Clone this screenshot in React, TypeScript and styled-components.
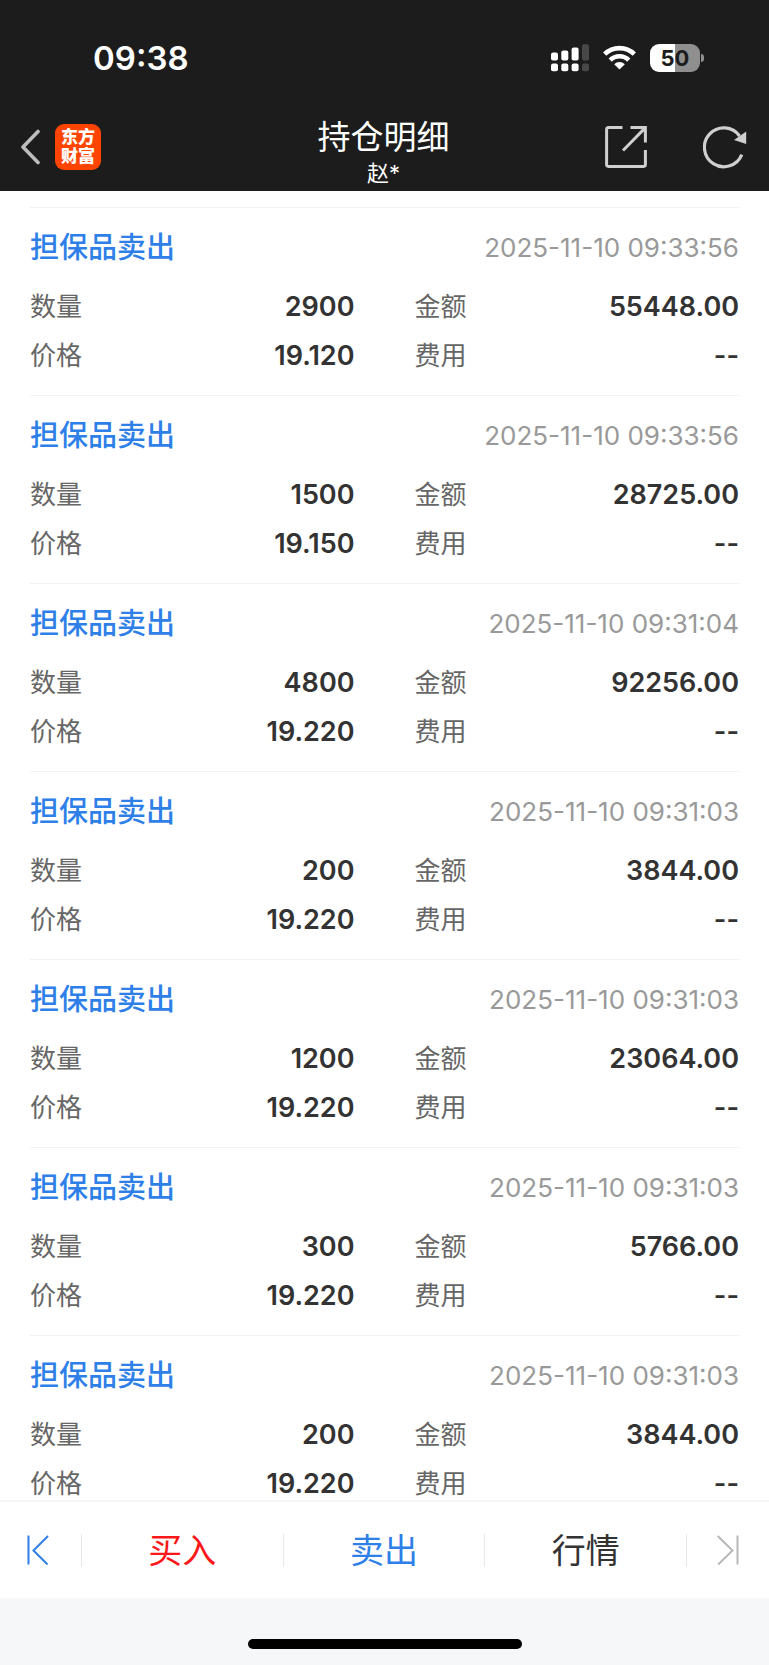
import React from "react";
import styled, { createGlobalStyle } from "styled-components";

const GlobalStyle = createGlobalStyle`
  *, *::before, *::after { box-sizing: border-box; }
  body {
    margin: 0;
    background: #ffffff;
    color: #333333;
    font-family: Inter, "Noto Sans CJK SC", sans-serif;
  }
  button {
    margin: 0;
    padding: 0;
    border: 0;
    background: none;
    color: inherit;
    font: inherit;
    cursor: pointer;
  }
  svg { display: block; }
`;

const Screen = styled.div`
  display: flex;
  flex-direction: column;
  height: 100vh;
`;

const Header = styled.header`
  flex: none;
  background: #1c1c1c;
  color: #ffffff;
`;

const StatusBar = styled.div`
  display: flex;
  align-items: center;
  justify-content: space-between;
  height: 115px;
  padding: 0 65px 0 93px;
`;

const Clock = styled.time`
  font-size: 33px;
  font-weight: 600;
  line-height: 40px;
`;

const StatusIcons = styled.div`
  display: flex;
  align-items: center;
  gap: 14px;
`;

const Battery = styled.div`
  display: flex;
  align-items: center;
  gap: 1px;
`;

const BatteryBody = styled.span`
  width: 50px;
  height: 28px;
  border-radius: 9px;
  background: linear-gradient(90deg, #ffffff 50%, #8f8f8f 50%);
  color: #1c1c1c;
  font-size: 22px;
  font-weight: 700;
  line-height: 28px;
  text-align: center;
`;

const BatteryTip = styled.span`
  width: 3px;
  height: 8px;
  border-radius: 0 3px 3px 0;
  background: #8f8f8f;
`;

const NavBar = styled.div`
  display: grid;
  grid-template-columns: 1fr auto 1fr;
  align-items: center;
  height: 76px;
  padding: 0 22px 0 20px;
`;

const NavLeft = styled.div`
  display: flex;
  align-items: center;
  gap: 14px;
  padding-bottom: 12px;
`;

const NavRight = styled.div`
  display: flex;
  align-items: center;
  justify-content: flex-end;
  gap: 56px;
  padding-bottom: 12px;
`;

const Logo = styled.span`
  display: flex;
  flex-direction: column;
  align-items: center;
  justify-content: center;
  width: 46px;
  height: 46px;
  border-radius: 9px;
  background: #ff4400;
  font-size: 17px;
  font-weight: 900;
  line-height: 19px;
`;

const NavTitle = styled.div`
  padding-bottom: 4px;
  text-align: center;
`;

const Title = styled.h1`
  margin: 0;
  font-size: 33px;
  font-weight: 400;
  line-height: 44px;
`;

const Account = styled.p`
  margin: 0;
  font-size: 22px;
  line-height: 28px;
`;

const TradeList = styled.ul`
  flex: 1;
  min-height: 0;
  margin: 0;
  padding: 16px 30px 0;
  overflow-y: auto;
  scrollbar-width: none;
  list-style: none;
`;

const TradeItem = styled.li`
  padding: 20px 0 15px;
  border-top: 1px solid #f2f2f2;
`;

const TradeHead = styled.div`
  display: flex;
  align-items: center;
  justify-content: space-between;
  margin-bottom: 14px;
  line-height: 40px;
`;

const TradeType = styled.h2`
  margin: 0;
  color: #2e7fe8;
  font-size: 29px;
  font-weight: 500;
`;

const TradeTime = styled.time`
  color: #999999;
  font-size: 26px;
`;

const Fields = styled.dl`
  display: grid;
  grid-template-columns: 1fr 1fr;
  column-gap: 60px;
  margin: 0;
`;

const Field = styled.div`
  display: flex;
  justify-content: space-between;
  line-height: 49px;
`;

const Label = styled.dt`
  color: #666666;
  font-size: 26px;
`;

const Value = styled.dd`
  margin: 0;
  font-size: 27px;
  font-weight: 600;
`;

const ActionBar = styled.nav`
  display: flex;
  flex: none;
  align-items: center;
  height: 98px;
  border-top: 2px solid #f6f6f6;
`;

const actionColors = { buy: "#fb1818", sell: "#2e7fe8", quote: "#333333" };

const Action = styled.button<{ $kind: keyof typeof actionColors }>`
  flex: 1;
  height: 33px;
  border-right: 1px solid #e8e8e8;
  color: ${(p) => actionColors[p.$kind]};
  font-size: 34px;
  line-height: 33px;
`;

const Jump = styled.button<{ $side: "start" | "end" }>`
  display: flex;
  align-items: center;
  justify-content: ${(p) => (p.$side === "start" ? "flex-start" : "flex-end")};
  width: 82px;
  height: 33px;
  padding: 0 30px 0 27px;
  border-right: ${(p) => (p.$side === "start" ? "1px solid #e8e8e8" : "0")};
  color: ${(p) => (p.$side === "start" ? "#2e7fe8" : "#b8b8b8")};
`;

const HomeArea = styled.footer`
  display: flex;
  flex: none;
  align-items: flex-end;
  justify-content: center;
  height: 67px;
  padding-bottom: 16px;
  background: #f6f7f9;
`;

const HomeIndicator = styled.span`
  width: 274px;
  height: 10px;
  border-radius: 5px;
  background: #000000;
`;

const SignalIcon = () => (
  <svg width="38" height="28" viewBox="0 0 38 28" fill="#fff" aria-hidden="true">
    <rect x="0" y="8.5" width="7" height="8" rx="2" />
    <rect x="10.3" y="6.5" width="7" height="10" rx="2" />
    <rect x="20.6" y="3.5" width="7" height="13" rx="2" />
    <rect x="31" y="0.3" width="7" height="16.2" rx="2" fill="#484848" />
    <rect x="0" y="19.6" width="7" height="7.6" rx="2" />
    <rect x="10.3" y="19.6" width="7" height="7.6" rx="2" />
    <rect x="20.6" y="19.6" width="7" height="7.6" rx="2" />
    <rect x="31" y="19.6" width="7" height="7.6" rx="2" fill="#484848" />
  </svg>
);

const WifiIcon = () => (
  <svg width="33" height="25" viewBox="0 0 33 25" fill="none" stroke="#fff" strokeWidth="4.6" aria-hidden="true">
    <path d="M1.7 9.2A21 21 0 0 1 31.3 9.2" />
    <path d="M7.2 15.1A13.2 13.2 0 0 1 25.8 15.1" />
    <path d="M16.5 24.6L11.2 19.2A7.7 7.7 0 0 1 21.8 19.2Z" fill="#fff" stroke="none" />
  </svg>
);

const BackIcon = () => (
  <svg width="21" height="36" viewBox="0 0 21 36" fill="none" stroke="#bdbdbd" strokeWidth="3.6" strokeLinecap="round" strokeLinejoin="round">
    <path d="M18 2.5L3 18L18 33.5" />
  </svg>
);

const ShareIcon = () => (
  <svg width="42" height="42" viewBox="0 0 42 42" fill="none" stroke="#cfcfcf" strokeWidth="3">
    <path d="M17.5 1.6H3.4Q1.6 1.6 1.6 3.4V38.6Q1.6 40.4 3.4 40.4H38.6Q40.4 40.4 40.4 38.6V24" />
    <path d="M25.5 1.6H40.4V16.5M40.4 1.6L18 24.5" />
  </svg>
);

const RefreshIcon = () => (
  <svg width="44" height="43" viewBox="0 0 44 43" fill="none" stroke="#cfcfcf" strokeWidth="3.2">
    <path d="M38.8 28.6A19.4 19.4 0 1 1 36.6 10" />
    <path d="M43.2 5.6V18L31 13.9Z" fill="#cfcfcf" stroke="none" />
  </svg>
);

const FirstIcon = () => (
  <svg width="22" height="30" viewBox="0 0 22 30" fill="none" stroke="currentColor" strokeWidth="2">
    <path d="M1.5 0.5V29.5M21 1L6.5 15.5L20.5 29.5" />
  </svg>
);

const LastIcon = () => (
  <svg width="22" height="30" viewBox="0 0 22 30" fill="none" stroke="currentColor" strokeWidth="2">
    <path d="M20.5 0.5V29.5M0.7 1L15.5 15.5L1.2 29.5" />
  </svg>
);

const trades = [
  { time: "2025-11-10 09:33:56", quantity: "2900", amount: "55448.00", price: "19.120" },
  { time: "2025-11-10 09:33:56", quantity: "1500", amount: "28725.00", price: "19.150" },
  { time: "2025-11-10 09:31:04", quantity: "4800", amount: "92256.00", price: "19.220" },
  { time: "2025-11-10 09:31:03", quantity: "200", amount: "3844.00", price: "19.220" },
  { time: "2025-11-10 09:31:03", quantity: "1200", amount: "23064.00", price: "19.220" },
  { time: "2025-11-10 09:31:03", quantity: "300", amount: "5766.00", price: "19.220" },
  { time: "2025-11-10 09:31:03", quantity: "200", amount: "3844.00", price: "19.220" },
];

const Entry = ({ label, value }: { label: string; value: string }) => (
  <Field>
    <Label>{label}</Label>
    <Value>{value}</Value>
  </Field>
);

export default function App() {
  return (
    <Screen lang="zh-CN">
      <GlobalStyle />
      <Header>
        <StatusBar>
          <Clock>09:38</Clock>
          <StatusIcons>
            <SignalIcon />
            <WifiIcon />
            <Battery>
              <BatteryBody>50</BatteryBody>
              <BatteryTip />
            </Battery>
          </StatusIcons>
        </StatusBar>
        <NavBar>
          <NavLeft>
            <button aria-label="返回"><BackIcon /></button>
            <Logo>
              <span>东方</span>
              <span>财富</span>
            </Logo>
          </NavLeft>
          <NavTitle>
            <Title>持仓明细</Title>
            <Account>赵*</Account>
          </NavTitle>
          <NavRight>
            <button aria-label="分享"><ShareIcon /></button>
            <button aria-label="刷新"><RefreshIcon /></button>
          </NavRight>
        </NavBar>
      </Header>
      <TradeList>
        {trades.map((t, i) => (
          <TradeItem key={i}>
            <TradeHead>
              <TradeType>担保品卖出</TradeType>
              <TradeTime>{t.time}</TradeTime>
            </TradeHead>
            <Fields>
              <Entry label="数量" value={t.quantity} />
              <Entry label="金额" value={t.amount} />
              <Entry label="价格" value={t.price} />
              <Entry label="费用" value="--" />
            </Fields>
          </TradeItem>
        ))}
      </TradeList>
      <ActionBar>
        <Jump $side="start" aria-label="第一条"><FirstIcon /></Jump>
        <Action $kind="buy">买入</Action>
        <Action $kind="sell">卖出</Action>
        <Action $kind="quote">行情</Action>
        <Jump $side="end" aria-label="最后一条"><LastIcon /></Jump>
      </ActionBar>
      <HomeArea>
        <HomeIndicator />
      </HomeArea>
    </Screen>
  );
}
